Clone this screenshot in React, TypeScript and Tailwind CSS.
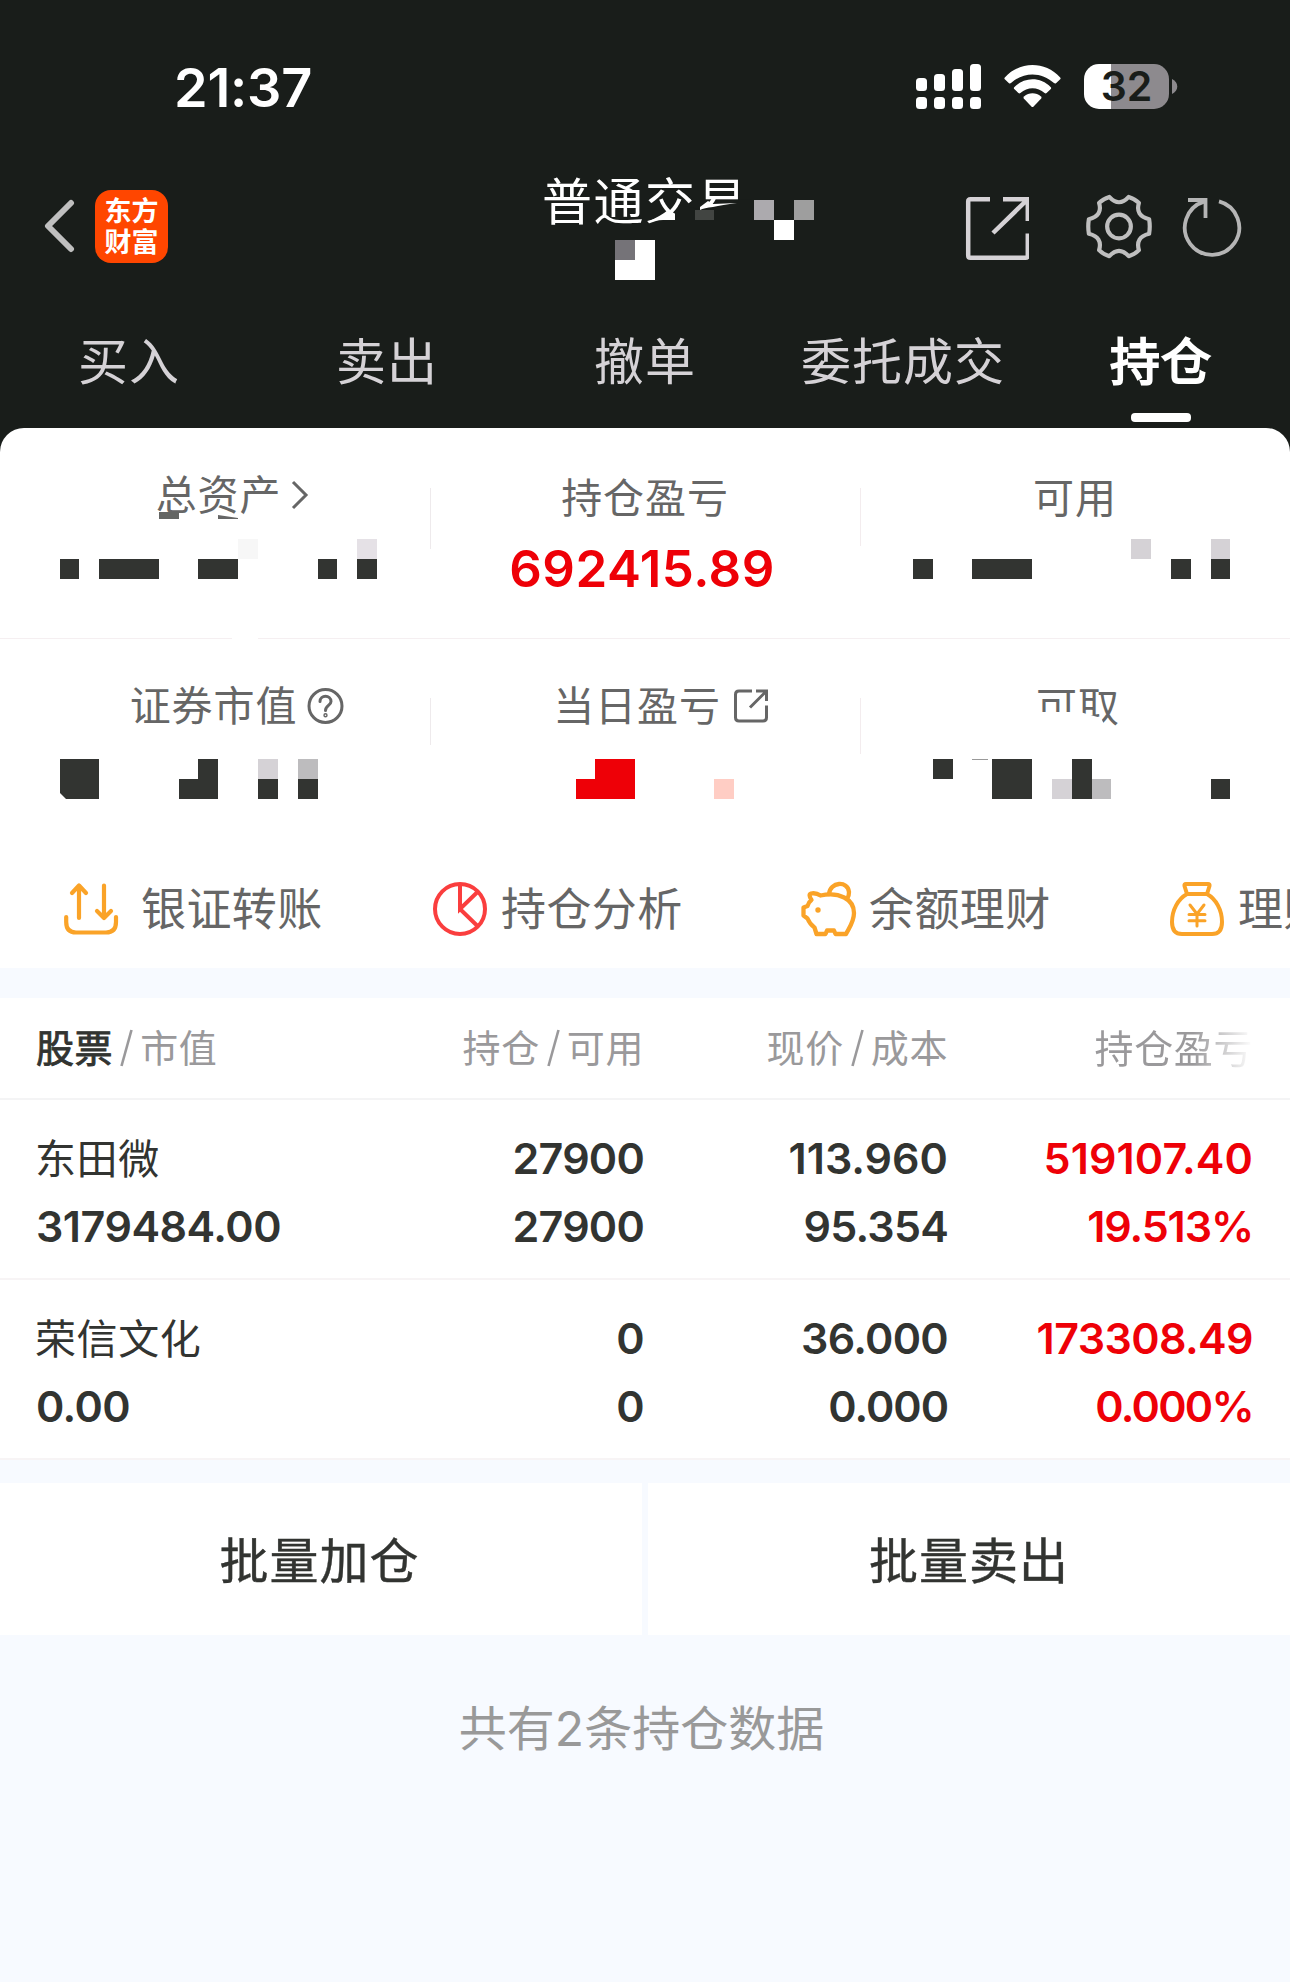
import React from "react";

type Cell = [x: number, y: number, w: number, h: number, fill: string];

const DARK = "#323431";

function Mosaic({ width, height, cells, children }: { width: number; height: number; cells: Cell[]; children?: React.ReactNode }) {
  return (
    <svg className="pointer-events-none absolute left-0 top-0" width={width} height={height} viewBox={`0 0 ${width} ${height}`}>
      {children}
      {cells.map(([x, y, w, h, fill], i) => (
        <rect key={i} x={x} y={y} width={w} height={h} fill={fill} />
      ))}
    </svg>
  );
}

function StatusBar() {
  const tops = [14, 10, 5, 0];
  return (
    <div className="flex h-[173px] items-start justify-between pl-[174px] pr-[112px] pt-16">
      <div className="mt-[-3px] text-[54px] font-semibold leading-[54px] tracking-[-0.2px]">21:37</div>
      <div className="flex items-start">
        <svg width="65" height="45" viewBox="0 0 65 45" fill="#fff">
          {tops.map((t, i) => (
            <React.Fragment key={i}>
              <rect x={i * 18} y={t} width="11" height={27 - t} rx="3.5" />
              <rect x={i * 18} y="33" width="11" height="12" rx="3.5" />
            </React.Fragment>
          ))}
        </svg>
        <svg className="ml-[23px] mt-px" width="57" height="43" viewBox="0 0 57 43" fill="#fff">
          <path d="M0.8 12.4C16-4 41-4 56.200 12.400Q57 13.400 56.200 14.300L52 18.200Q51 19 50 18.100C38 6.500 19 6.500 7 18.100Q6 19 5 18.200L0.800 14.300Q0 13.400 0.800 12.400Z" />
          <path d="M10.200 22.200C20.500 11.700 36.500 11.700 46.800 22.200Q47.600 23.100 46.800 24L42.600 28Q41.600 28.800 40.600 28C33.500 21.500 23.500 21.500 16.400 28Q15.400 28.800 14.400 28L10.200 24Q9.400 23.100 10.200 22.200Z" />
          <path d="M20 31.500C25 27.300 32 27.300 37 31.500Q38 32.500 37.200 33.500L29.600 41.500Q28.500 42.500 27.400 41.500L19.800 33.500Q19 32.500 20 31.500Z" />
        </svg>
        <div className="ml-[23px] flex h-[45px] w-[85px] items-center justify-center rounded-[15px] bg-[linear-gradient(90deg,#fff_27px,#8d8a8e_27px)] text-[41px] font-semibold leading-[45px] text-[#191d1a]">
          32
        </div>
        <svg className="ml-[3px] mt-[15px]" width="6" height="15" viewBox="0 0 6 15" fill="#8d8a8e">
          <path d="M0 0C7 3 7 12 0 15Z" />
        </svg>
      </div>
    </div>
  );
}

function TitleBar() {
  return (
    <div className="relative flex h-[127px] items-start">
      <svg className="ml-[43px] mt-[26px]" width="33" height="54" viewBox="0 0 33 54" fill="none" stroke="#bfbfbf" strokeWidth="6" strokeLinecap="round" strokeLinejoin="round">
        <path d="M28 4L5 27L28 50" />
      </svg>
      <div className="ml-[19px] mt-[17px] flex h-[73px] w-[73px] flex-col items-center justify-center rounded-[16px] bg-[#ff4600] pt-px text-[27px] font-bold leading-[31px]">
        <span>东方</span>
        <span>财富</span>
      </div>
      <div className="ml-[374px] mt-[2px] h-[54px] whitespace-nowrap text-[50px] leading-[54px] tracking-[1.500px]">普通交易</div>
      <Mosaic
        width={1290}
        height={127}
        cells={[
          [695, 37, 19, 10, "#424542"],
          [754, 27, 20, 20, "#acaaae"],
          [794, 27, 20, 20, "#9e9e9e"],
          [774, 47, 20, 20, "#fff"],
          [615, 67, 20, 20, "#757378"],
          [635, 67, 20, 20, "#fff"],
          [615, 87, 40, 20, "#fff"],
        ]}
      >
        <path d="M647 51L665 45L675 41L679 32L698 36L722 28L752 26V62H647Z" fill="#191d1a" />
        <path d="M647 49Q661 43 668 37L675 41V47H663Q655 47 647 49Z" fill="#fff" />
        <path d="M700 34L708 28L713 31L737 30Q722 32 713 34Q704 35 700 37Z" fill="#fff" />
      </Mosaic>
      <div className="absolute right-[46px] top-[20px] flex items-start">
        <svg width="66" height="68" viewBox="0 0 66 68" fill="none" stroke="#d5d2d6" strokeWidth="4.500">
          <path d="M27 6.200H7.500Q5.200 6.200 5.200 8.500V62.500Q5.200 64.800 7.500 64.800H62.500Q64.800 64.800 64.800 62.500V40.500" />
          <path d="M40 6.200H64.800V28M63.500 7.500L30 40" />
        </svg>
        <svg className="ml-[55px]" width="70" height="68" viewBox="-36 -34.500 72 70" fill="none" stroke="#bfbfbf" strokeWidth="4.300" strokeLinejoin="round">
          <circle r="12.200" />
          <path d="M-10 -30.500Q0 -19.500 10 -30.500Q16.500 -28.500 20.500 -24.300Q16.500 -11 31 -7.500Q32.300 0 31 7.500Q16.500 11 20.500 24.300Q16.500 28.500 10 30.500Q0 19.500 -10 30.500Q-16.500 28.500 -20.500 24.300Q-16.500 11 -31 7.500Q-32.300 0 -31 -7.500Q-16.500 -11 -20.500 -24.300Q-16.500 -28.500 -10 -30.500Z" />
        </svg>
        <svg className="ml-[28px]" width="62" height="68" viewBox="0 0 62 68" fill="none" stroke="#b5b5b5" strokeWidth="3.800">
          <path d="M37 8.300A27.200 27.200 0 1 1 22 8.600" />
          <path d="M6 7H23.500V25" />
        </svg>
      </div>
    </div>
  );
}

function Tabs() {
  const tabs = ["买入", "卖出", "撤单", "委托成交"];
  return (
    <div className="grid h-32 grid-cols-5 text-center text-[50px] leading-[54px] tracking-[1px] text-[#d5d2d6]">
      {tabs.map((t) => (
        <div key={t} className="pt-[35px]">{t}</div>
      ))}
      <div className="flex flex-col items-center pt-[35px] text-white">
        <span className="[-webkit-text-stroke:2px_#fff]">持仓</span>
        <div className="mt-[24px] h-[9px] w-[60px] rounded-[4px] bg-white" />
      </div>
    </div>
  );
}

const label = "flex h-[46px] items-center justify-center whitespace-nowrap text-[41px] leading-none tracking-[0.900px] text-[#666]";

function Summary() {
  return (
    <section className="relative h-[540px] rounded-t-[24px] bg-white">
      <div className="grid h-[211px] grid-cols-3 border-b border-[#f5eff1] pt-[44px]">
        <div className={label + " pl-[36px]"}>
          <span>总资产</span>
          <svg className="ml-[9px]" width="20" height="32" viewBox="0 0 20 32" fill="none" stroke="#666" strokeWidth="3">
            <path d="M3 3L16 16L3 29" />
          </svg>
        </div>
        <div className="flex flex-col items-center">
          <div className={label + " mt-[3px]"}>持仓盈亏</div>
          <div className="mr-[6px] mt-[21px] text-[51px] font-semibold leading-[54px] tracking-[0.500px] text-[#ee0007]">692415.89</div>
        </div>
        <div className={label + " mt-[3px]"}>可用</div>
      </div>
      <div className="grid h-[217px] grid-cols-3 pt-[44px]">
        <div className={label + " pl-[44px]"}>
          <span>证券市值</span>
          <svg className="ml-[10px]" width="37" height="38" viewBox="0 0 37 38" fill="none" stroke="#666" strokeWidth="3" strokeLinecap="round">
            <circle cx="18.500" cy="19" r="16.500" />
            <path d="M13 14.500C13 7.500 24 7.500 24 14.500C24 18.500 18.500 18.500 18.500 23.500" />
            <circle cx="18.500" cy="28.300" r="0.700" />
          </svg>
        </div>
        <div className={label + " pl-[32px]"}>
          <span>当日盈亏</span>
          <svg className="ml-[12px]" width="36" height="36" viewBox="0 0 36 36" fill="none" stroke="#666" strokeWidth="3">
            <path d="M19 3H6Q2.500 3 2.500 6.500V29.500Q2.500 33 6 33H30Q33.500 33 33.500 29.500V17.500M23 3H33.500V13M33 3.500L17 19.500" />
          </svg>
        </div>
        <div className={label + " pl-[6px] pt-[2px]"}>可取</div>
      </div>
      <Mosaic
        width={1290}
        height={400}
        cells={[
          [430, 60, 1, 61, "#eeeaec"],
          [860, 60, 1, 58, "#f3ecee"],
          [430, 270, 1, 47, "#eeeaec"],
          [860, 270, 1, 56, "#f3ecee"],
          [159, 84, 20, 7, "#646664"],
          [232, 208, 26, 4, "#fff"],
          [60, 131, 19, 20, DARK],
          [99, 131, 60, 20, DARK],
          [198, 131, 40, 20, DARK],
          [318, 131, 19, 20, DARK],
          [357, 131, 20, 20, DARK],
          [238, 111, 20, 20, "#f7f7f7"],
          [357, 111, 20, 20, "#e5e1e6"],
          [913, 131, 20, 20, DARK],
          [972, 131, 60, 20, DARK],
          [1171, 131, 20, 20, DARK],
          [1211, 131, 19, 20, DARK],
          [1131, 111, 20, 20, "#d5d2d6"],
          [1211, 111, 19, 20, "#d5d2d6"],
          [179, 351, 39, 20, DARK],
          [198, 331, 20, 20, DARK],
          [258, 331, 20, 20, "#d5d2d6"],
          [258, 351, 20, 20, DARK],
          [298, 331, 20, 20, "#bdbcbe"],
          [298, 351, 20, 20, DARK],
          [576, 351, 20, 20, "#ee0007"],
          [595, 331, 40, 40, "#ee0007"],
          [714, 351, 20, 20, "#ffcdc4"],
          [933, 331, 20, 20, DARK],
          [992, 331, 40, 40, DARK],
          [1052, 351, 20, 20, "#d5d2d6"],
          [1072, 331, 20, 40, DARK],
          [1092, 351, 19, 20, "#bdbcbe"],
          [1211, 351, 19, 20, DARK],
          [972, 331, 16, 1, "#999"],
        ]}
      >
        <path d="M218 87L238 90V91H218Z" fill="#666" />
        <path d="M60 331H99V371H66L60 365Z" fill={DARK} />
        <path d="M1030 284H1080L1101 290L1106 300V302H1030Z" fill="#fff" />
      </Mosaic>
      <Shortcuts />
    </section>
  );
}

function Shortcuts() {
  return (
    <div className="flex h-[112px] overflow-hidden pl-[63px] pt-[23px] text-[45px] leading-none tracking-[0.400px] text-[#666]">
      <div className="flex h-[60px] w-[369px] shrink-0 items-center">
        <svg width="56" height="56" viewBox="0 0 56 56" fill="none" stroke="#faa328" strokeWidth="4.200" strokeLinecap="round" strokeLinejoin="round">
          <path d="M16 37V5M9 12L16 4.500L23 12M41 4.500V36M34 30L41 37L48 30" />
          <path d="M3.200 36V41Q3.200 51.500 13 51.500H43Q53 51.500 53 41V36" />
        </svg>
        <span className="ml-[22px]">银证转账</span>
      </div>
      <div className="flex h-[60px] w-[369px] shrink-0 items-center">
        <svg width="56" height="56" viewBox="0 0 56 56" fill="none" stroke="#fa3e3e" strokeWidth="4">
          <circle cx="28" cy="28" r="25" />
          <path d="M28 3V28L46 10.500M28 28L46 45.500" />
        </svg>
        <span className="ml-[13px]">持仓分析</span>
      </div>
      <div className="flex h-[60px] w-[368px] shrink-0 items-center">
        <svg width="56" height="56" viewBox="0 0 56 56" fill="none" stroke="#faa328" strokeWidth="4.300" strokeLinejoin="round" strokeLinecap="round">
          <path d="M10.500 19Q7 13.500 10 12.500Q15 11.500 19.500 14.500C38 10.500 53 18 53 32C53 41 48 47 45 53H34.500L33 49.500H26L24.500 53H15.500L13.500 46.500Q9 43.500 6.500 37.500L2.500 34.500V26.500L6.500 25Q7.500 21 10.500 19Z" />
          <path d="M28 13C29 0.500 47 -0.500 48 11Q48 15 46.500 17" />
          <circle cx="17" cy="29" r="1.200" fill="#faa328" strokeWidth="3" />
        </svg>
        <span className="ml-[12px]">余额理财</span>
      </div>
      <div className="flex h-[60px] w-[369px] shrink-0 items-center">
        <svg width="56" height="56" viewBox="0 0 56 56" fill="none" stroke="#faa328" strokeWidth="4" strokeLinejoin="round" strokeLinecap="round">
          <path d="M18 13L15.500 5Q15 3 17 3H39Q41 3 40.500 5L38 13ZM18 13C9 18 3 29 3 41Q3 53 13 53H43Q53 53 53 41C53 29 47 18 38 13" />
          <path d="M21 24L28 33L35 24M28 33V45M20 33.500H36M20 39.800H36" strokeWidth="3" />
        </svg>
        <span className="ml-[13px] whitespace-nowrap">理财</span>
      </div>
    </div>
  );
}

const cols = "grid grid-cols-[284px_324px_304px_305px]";

function Slash() {
  return (
    <svg className="mx-[7px] inline-block align-[-5px]" width="13" height="38" viewBox="0 0 13 38" fill="none" stroke="#9a999b" strokeWidth="2.600">
      <path d="M11.500 1L1.500 37" />
    </svg>
  );
}

function Header() {
  return (
    <div className={cols + " mt-[30px] h-[102px] items-center whitespace-nowrap border-b-2 border-[#f4f4f5] bg-white pl-9 text-right text-[38px] leading-none tracking-[0.600px] text-[#9a999b]"}>
      <div className="text-left"><span className="text-[#323431] [-webkit-text-stroke:0.9px_#323431]">股票</span><Slash />市值</div>
      <div>持仓<Slash />可用</div>
      <div>现价<Slash />成本</div>
      <div><span className="bg-[linear-gradient(90deg,#9a999b_62%,#fff_100%)] bg-clip-text text-[39px] text-transparent">持仓盈亏</span></div>
    </div>
  );
}

type Figure = { text: string; spacing: string };
type Holding = { name: string; value: Figure; columns: [Figure, Figure][] };

const fig = (text: string, spacing: string): Figure => ({ text, spacing });

const holdings: Holding[] = [
  {
    name: "东田微",
    value: fig("3179484.00", "tracking-[-0.5px]"),
    columns: [
      [fig("27900", "tracking-[-0.8px]"), fig("27900", "tracking-[-0.8px]")],
      [fig("113.960", "tracking-[0px]"), fig("95.354", "tracking-[-0.8px]")],
      [fig("519107.40", "tracking-[0.1px]"), fig("19.513%", "tracking-[-1.1px]")],
    ],
  },
  {
    name: "荣信文化",
    value: fig("0.00", "tracking-[-0.6px]"),
    columns: [
      [fig("0", "tracking-[-0.5px]"), fig("0", "tracking-[-0.5px]")],
      [fig("36.000", "tracking-[-0.7px]"), fig("0.000", "tracking-[-1px]")],
      [fig("173308.49", "tracking-[-0.6px]"), fig("0.000%", "tracking-[-1.7px]")],
    ],
  },
];

function Row({ h }: { h: Holding }) {
  return (
    <div className={cols + " h-[180px] border-b-2 border-[#f7f4f5] bg-white pl-9 pt-[24px] text-right text-[43px] font-semibold leading-[68px] text-[#323431]"}>
      <div className="whitespace-nowrap text-left">
        <div className="-ml-px h-[68px] pt-px text-[41px] font-normal tracking-[0.600px]">{h.name}</div>
        <div className={h.value.spacing}>{h.value.text}</div>
      </div>
      {h.columns.map(([top, bottom], i) => (
        <div key={i} className={i === 2 ? "text-[#ee0007]" : ""}>
          <div className={top.spacing}>{top.text}</div>
          <div className={bottom.spacing}>{bottom.text}</div>
        </div>
      ))}
    </div>
  );
}

export default function App() {
  return (
    <div className="min-h-[1982px] w-[1290px] overflow-hidden bg-[#f7faff] font-['Inter','Noto_Sans_CJK_SC',sans-serif]" lang="zh-CN">
      <div className="bg-[#191d1a] text-white">
        <StatusBar />
        <TitleBar />
        <Tabs />
        <Summary />
      </div>
      <Header />
      {holdings.map((h) => (
        <Row key={h.name} h={h} />
      ))}
      <div className="mt-[23px] grid h-[152px] grid-cols-2 gap-[6px] text-center text-[49px] leading-[157px] tracking-[1px] text-[#323431]">
        <div className="h-[152px] bg-white pr-[3px] [-webkit-text-stroke:0.4px_#323431]">批量加仓</div>
        <div className="h-[152px] bg-white [-webkit-text-stroke:0.4px_#323431]">批量卖出</div>
      </div>
      <div className="mt-[67px] pr-[7px] text-center text-[48px] leading-[54px] text-[#999]">共有2条持仓数据</div>
    </div>
  );
}
